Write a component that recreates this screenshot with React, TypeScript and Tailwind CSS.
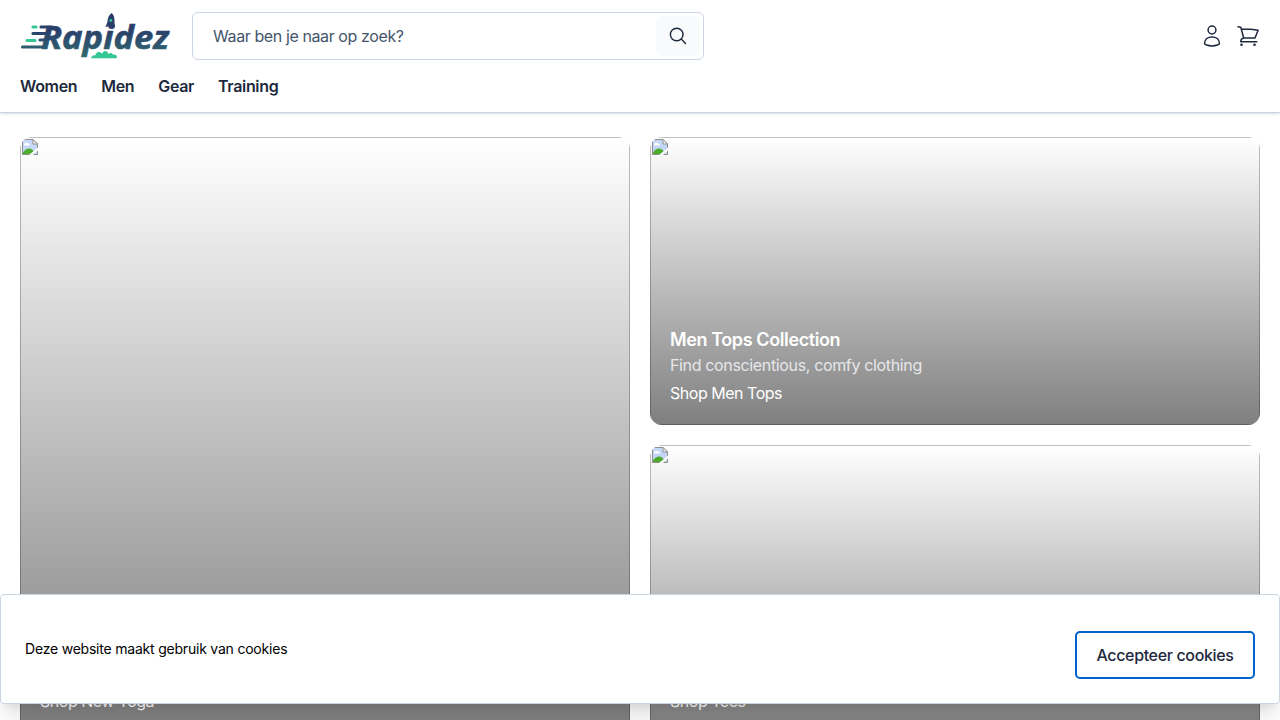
const menu = ["Women", "Men", "Gear", "Training"];

function Logo() {
  return (
    <svg width="150" height="48" viewBox="20 12 150 48" className="block shrink-0">
      <defs>
        <linearGradient id="ink" gradientUnits="userSpaceOnUse" x1="0" y1="14" x2="0" y2="58">
          <stop offset="0" stopColor="#293a67" />
          <stop offset="0.4" stopColor="#2b416b" />
          <stop offset="1" stopColor="#306b70" />
        </linearGradient>
      </defs>
      <text
        x="41"
        y="48.500"
        textLength="128"
        lengthAdjust="spacingAndGlyphs"
        fill="url(#ink)"
        stroke="url(#ink)"
        strokeWidth="0.600"
        className="font-['Open_Sans',sans-serif] text-[33px] font-bold italic"
      >
        Rapidez
      </text>
      <path d="M41 27h10M33 33.500h15M40 40h6M22.500 47h23" stroke="url(#ink)" strokeWidth="3.200" strokeLinecap="round" />
      <path d="M33 27h3M27 40.500h8" stroke="#34c794" strokeWidth="3.200" strokeLinecap="round" />
      <path d="M111.700 13c-3 2-4 5-4.300 9l-2 5.300 3.100-1h3.500l3 1.200-.5-5c.3-4-.5-7.500-2.800-9.500z" fill="url(#ink)" />
      <circle cx="110.800" cy="20.500" r="1.400" fill="#34c794" />
      <path d="M91 58.200c1-3 3-3.200 4.500-3 .5-4 5-4 6.500-1.500 2-4 5.500-3 6.500.5 1.500-2 4-1.500 4.500.5 2.500-1 4 .5 4 3.500z" fill="#34c794" />
    </svg>
  );
}

function BrokenImage() {
  return (
    <svg width="16" height="16" viewBox="0 0 16 16" className="block">
      <path d="M.5.500h10.500l4.500 4.500v10.500H.5z" fill="#c6d9fa" />
      <path d="M2 6c0-2 3-3.500 4-1.500 2.500 0 2.500 2 .5 2H2z" fill="#fff" />
      <path d="M1 15v-1.500c3-5 8-5 10-2l2 3.500z" fill="#4faf2c" />
      <path d="M.5.500h10.500l4.500 4.500v10.500H.5z" fill="none" stroke="#8f8f8f" />
      <path d="M11 .5v4.500h4.500z" fill="#fff" stroke="#8f8f8f" />
      <path d="M16 8.500v3L11 16H7z" fill="#fff" />
    </svg>
  );
}

interface CardProps {
  title?: string;
  text?: string;
  link: string;
  className?: string;
}

function Card({ title, text, link, className = "" }: CardProps) {
  return (
    <article className={`relative flex flex-col overflow-hidden rounded-xl ${className}`}>
      <div className="flex-1 border border-[#c0c0c0] p-px">
        <BrokenImage />
      </div>
      <div className="absolute inset-0 flex flex-col justify-end bg-[linear-gradient(to_bottom,transparent,rgba(0,0,0,0.5))] p-5 text-white">
        {title && <h2 className="pt-px text-lg leading-[26px] font-semibold tracking-[-0.022em]">{title}</h2>}
        {text && <p className="leading-6 tracking-[-0.022em] text-gray-200">{text}</p>}
        <a className="mt-1 leading-6 tracking-[-0.03em]">{link}</a>
      </div>
    </article>
  );
}

export default function App() {
  return (
    <div className="relative h-[720px] overflow-hidden bg-white font-['Inter',sans-serif] text-base text-slate-800">
      <header className="h-[113px] border-b border-slate-300 px-5 pt-3 shadow-sm">
        <div className="flex h-12 items-center">
          <Logo />
          <div className="ml-[22px] flex h-12 w-[512px] items-center justify-between rounded-md border border-slate-300 pr-[3px] pl-5">
            <span className="tracking-[-0.025em] text-slate-600">Waar ben je naar op zoek?</span>
            <button className="flex h-10 w-11 items-center justify-center rounded-md bg-slate-50">
              <svg width="18" height="18" viewBox="0 0 18 18" fill="none" stroke="currentColor" strokeWidth="1.400" strokeLinecap="round">
                <circle cx="7.700" cy="7.500" r="6.300" />
                <path d="m12.300 12.100 4.200 4.400" />
              </svg>
            </button>
          </div>
          <div className="ml-auto flex items-center gap-3">
            <svg width="24" height="24" viewBox="0 0 24 24" fill="none" stroke="currentColor" strokeWidth="1.500">
              <circle cx="12" cy="6" r="3.900" />
              <path d="M4.500 19.500C4.500 15.200 8 13 12 13s7.500 2.200 7.500 6.500c0 1-3.200 2.400-7.500 2.400s-7.500-1.400-7.500-2.400z" />
            </svg>
            <svg width="24" height="24" viewBox="0 0 24 24" fill="none" stroke="currentColor" strokeWidth="1.500" strokeLinejoin="round" strokeLinecap="round">
              <path d="M2 2.700 4.800 3.200 7.700 14H19l3.100-7.700C17 5.300 11 5 5.300 5M7.700 14c-1.800.3-2.900 1.900-2.900 3.700h16" />
              <circle cx="5.500" cy="20.700" r="1.300" fill="currentColor" stroke="none" />
              <circle cx="18.500" cy="20.700" r="1.300" fill="currentColor" stroke="none" />
            </svg>
          </div>
        </div>
        <nav className="mt-3.5 flex gap-6 leading-6 font-semibold tracking-[-0.021em]">
          {menu.map((item) => (
            <a key={item}>{item}</a>
          ))}
        </nav>
      </header>
      <main className="grid grid-cols-2 grid-rows-[288px_288px] gap-5 px-5 pt-6">
        <Card className="row-span-2" link="Shop New Yoga" />
        <Card title="Men Tops Collection" text="Find conscientious, comfy clothing" link="Shop Men Tops" />
        <Card link="Shop Tees" />
      </main>
      <div className="absolute inset-x-0 bottom-4 flex h-[110px] items-center justify-between rounded border border-slate-300 bg-white px-6 shadow-xl">
        <p className="text-sm tracking-[-0.015em] text-black">Deze website maakt gebruik van cookies</p>
        <button className="mt-3 flex h-12 w-[180px] items-center justify-center rounded-[5px] border-2 border-[#0060cc] font-medium tracking-[-0.022em]">
          Accepteer cookies
        </button>
      </div>
    </div>
  );
}
